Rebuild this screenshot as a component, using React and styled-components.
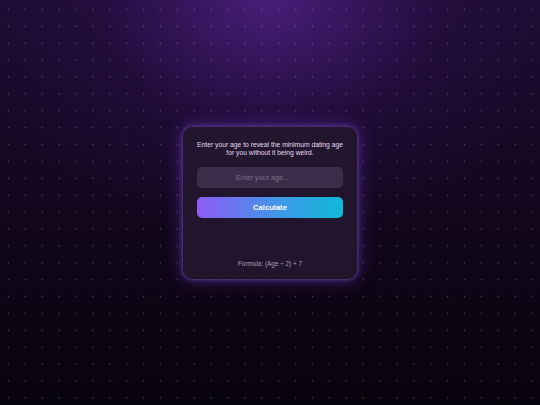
import React, { useState } from "react";
import styled, { createGlobalStyle } from "styled-components";

const GlobalStyle = createGlobalStyle`
  * { box-sizing: border-box; }
  html, body { margin: 0; padding: 0; }
  body {
    font-family: "Liberation Sans", Arial, sans-serif;
    background: #0b0512;
  }
`;

const Page = styled.div`
  position: relative;
  width: 540px;
  height: 405px;
  display: flex;
  align-items: center;
  justify-content: center;
  overflow: hidden;
  background:
    radial-gradient(ellipse 320px 240px at 270px 0px, rgba(76, 32, 128, 0.9), rgba(42, 15, 74, 0.45) 55%, rgba(0, 0, 0, 0) 100%),
    linear-gradient(180deg, #1c0b31 0%, #13071f 45%, #07030b 100%);

  &::before {
    content: "";
    position: absolute;
    inset: 0;
    background-image: radial-gradient(circle at center, rgba(200, 180, 230, 0.3) 0.7px, transparent 1.1px);
    background-size: 16.9px 16.9px;
    background-position: 0px 1px;
    pointer-events: none;
  }
`;

const Card = styled.div`
  position: relative;
  width: 176px;
  height: 154px;
  border-radius: 10px;
  background: rgba(34, 22, 46, 0.96);
  border: 1px solid rgba(150, 90, 230, 0.35);
  box-shadow: 0 0 18px rgba(130, 70, 220, 0.45), 0 0 4px rgba(150, 90, 240, 0.4);
  padding: 14px 14px 12px;
  display: flex;
  flex-direction: column;
`;

const Intro = styled.p`
  margin: 0 -8px;
  font-size: 6.75px;
  line-height: 8.4px;
  text-align: center;
  white-space: nowrap;
  color: #e4dbee;
`;

const AgeInput = styled.input`
  margin-top: 10px;
  height: 21px;
  width: 100%;
  border: none;
  outline: none;
  border-radius: 5px;
  background: #3a2d4a;
  color: #e6ddef;
  font-family: inherit;
  font-size: 7.2px;
  text-align: center;

  &::placeholder {
    color: #7c6f89;
  }
`;

const CalcButton = styled.button`
  margin-top: 9px;
  height: 21px;
  width: 100%;
  border: none;
  border-radius: 5px;
  background: linear-gradient(90deg, #8b5cf6 0%, #3b9be6 60%, #0fb8d8 100%);
  color: #ffffff;
  font-family: inherit;
  font-weight: 700;
  font-size: 7.6px;
  cursor: pointer;
`;

const Formula = styled.div`
  margin-top: auto;
  font-size: 6.4px;
  text-align: center;
  color: #aa9eb7;
`;

export default function App() {
  const [age, setAge] = useState("");

  return (
    <>
      <GlobalStyle />
      <Page>
        <Card>
          <Intro>
            Enter your age to reveal the minimum dating age
            <br />
            for you without it being weird.
          </Intro>
          <AgeInput
            type="number"
            placeholder="Enter your age..."
            value={age}
            onChange={(e) => setAge(e.target.value)}
          />
          <CalcButton>Calculate</CalcButton>
          <Formula>Formula: (Age ÷ 2) + 7</Formula>
        </Card>
      </Page>
    </>
  );
}
